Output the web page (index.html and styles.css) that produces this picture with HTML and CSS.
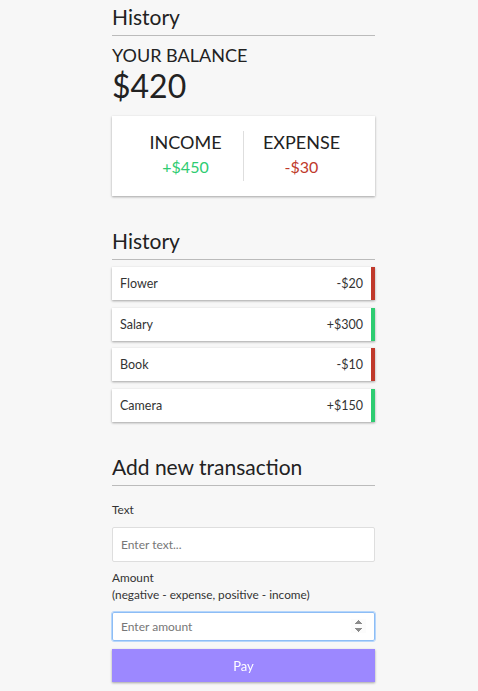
FILE: index.html
```html
<!DOCTYPE html>
<html lang="en">
<head>
<meta charset="UTF-8">
<title>Expense Tracker</title>
<link rel="stylesheet" href="styles.css">
</head>
<body>
<div class="container">
  <h3 class="section-title first">History</h3>
  <h4 class="balance-label">Your Balance</h4>
  <h1 class="balance">$420</h1>

  <div class="inc-exp">
    <div class="inc-exp-col">
      <h4 class="inc-exp-title">Income</h4>
      <p class="money plus">+$450</p>
    </div>
    <div class="inc-exp-col">
      <h4 class="inc-exp-title">Expense</h4>
      <p class="money minus">-$30</p>
    </div>
  </div>

  <h3 class="section-title">History</h3>
  <ul class="list">
    <li class="item minus">Flower <span>-$20</span></li>
    <li class="item plus">Salary <span>+$300</span></li>
    <li class="item minus">Book <span>-$10</span></li>
    <li class="item plus">Camera <span>+$150</span></li>
  </ul>

  <h3 class="section-title">Add new transaction</h3>
  <form class="form">
    <div class="form-control first-control">
      <label class="label" for="text">Text</label>
      <input class="field" type="text" id="text" placeholder="Enter text...">
    </div>
    <div class="form-control">
      <label class="label" for="amount">Amount <br>(negative - expense, positive - income)</label>
      <input class="field field-amount" type="number" id="amount" placeholder="Enter amount" autofocus>
    </div>
    <button class="btn" type="button">Pay</button>
  </form>
</div>
</body>
</html>
```

FILE: styles.css
```css
* { box-sizing: border-box; }

body {
  margin: 0;
  background: #f7f7f7;
  font-family: Lato, "Open Sans", "Liberation Sans", sans-serif;
  color: #222;
}

.container {
  width: 263px;
  margin: 0 auto;
  padding-left: 9px;
  box-sizing: content-box;
}

.section-title {
  font-size: 21px;
  font-weight: 400;
  margin: 32px 0 7px;
  padding-bottom: 6px;
  border-bottom: 1px solid #bbb;
}

.section-title.first { margin-top: 4px; margin-bottom: 8px; }

.balance-label {
  margin: 8px 0 0;
  font-size: 18px;
  font-weight: 400;
  text-transform: uppercase;
}

.balance {
  margin: 0 0 11px;
  font-size: 32px;
  font-weight: 400;
  letter-spacing: 0;
}

.inc-exp {
  background: #fff;
  box-shadow: 0 1px 3px rgba(0,0,0,0.12), 0 1px 2px rgba(0,0,0,0.24);
  padding: 15px 16px;
  display: flex;
  justify-content: space-between;
  margin: 0;
}

.inc-exp-col {
  flex: 1;
  text-align: center;
}

.inc-exp-col:first-of-type {
  border-right: 1px solid #dedede;
}

.inc-exp-title {
  margin: 0;
  font-size: 18px;
  font-weight: 400;
  text-transform: uppercase;
}

.money {
  font-size: 16px;
  letter-spacing: 0;
  margin: 4px 0 5px;
}

.money.plus { color: #2ecc71; }
.money.minus { color: #c0392b; }

.list {
  list-style: none;
  padding: 0;
  margin: 0 0 27px;
}

.item {
  background: #fff;
  box-shadow: 0 1px 3px rgba(0,0,0,0.12), 0 1px 2px rgba(0,0,0,0.24);
  color: #333;
  display: flex;
  justify-content: space-between;
  align-items: center;
  height: 33px;
  padding: 0 8px;
  margin: 0 0 7.7px;
  font-size: 12.5px;
}

.item.plus { border-right: 4px solid #2ecc71; }
.item.minus { border-right: 4px solid #c0392b; }

.form-control {
  margin: 7px 0 0;
}

.form-control.first-control {
  margin-top: 15px;
}

.label {
  display: block;
  font-size: 11.8px;
  font-weight: 400;
  line-height: 17px;
  margin-bottom: 9px;
  color: #333;
}

.field {
  display: block;
  width: 100%;
  height: 35px;
  border: 1px solid #dedede;
  border-radius: 2px;
  padding: 0 8px;
  font-family: inherit;
  font-size: 12px;
  color: #333;
  background: #fff;
}

.field::placeholder { color: #777; }

.field-amount {
  height: 29px;
  border: 1px solid #8dbdf5;
  outline: 1px solid #b6d6fb;
}

.field-amount:focus {
  border: 1px solid #8dbdf5;
  outline: 1px solid #b6d6fb;
}

.btn {
  display: block;
  width: 100%;
  height: 33px;
  margin: 8px 0 10px;
  background: #9c88ff;
  color: #fff;
  border: 0;
  font-family: inherit;
  font-size: 13px;
  box-shadow: 0 1px 3px rgba(0,0,0,0.12), 0 1px 2px rgba(0,0,0,0.24);
}
```
